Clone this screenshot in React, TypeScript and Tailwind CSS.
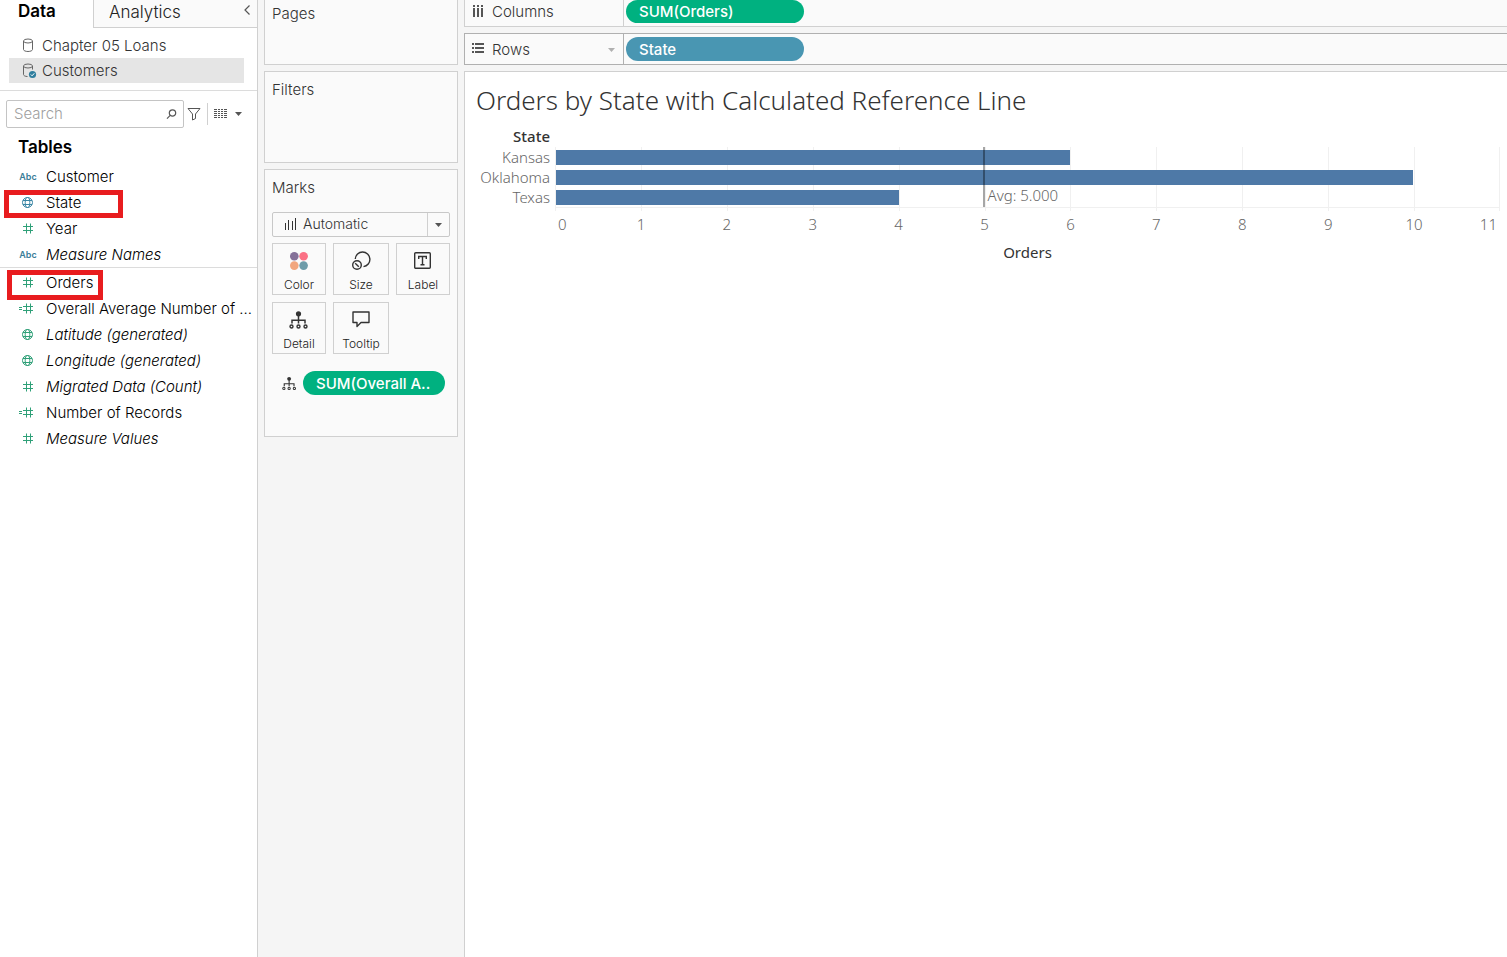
import type { ReactNode } from "react";

type Kind = "abc" | "globe" | "hash" | "calc";
type Field = { name: string; kind: Kind; generated?: boolean; mark?: "wide" | "narrow"; green?: boolean };

const dimensions: Field[] = [
  { name: "Customer", kind: "abc" },
  { name: "State", kind: "globe", mark: "wide" },
  { name: "Year", kind: "hash", green: true },
  { name: "Measure Names", kind: "abc", generated: true },
];

const measures: Field[] = [
  { name: "Orders", kind: "hash", green: true, mark: "narrow" },
  { name: "Overall Average Number of ...", kind: "calc", green: true },
  { name: "Latitude (generated)", kind: "globe", green: true, generated: true },
  { name: "Longitude (generated)", kind: "globe", green: true, generated: true },
  { name: "Migrated Data (Count)", kind: "hash", green: true, generated: true },
  { name: "Number of Records", kind: "calc", green: true },
  { name: "Measure Values", kind: "hash", green: true, generated: true },
];

const bars = [
  { state: "Kansas", orders: 6 },
  { state: "Oklahoma", orders: 10 },
  { state: "Texas", orders: 4 },
];

const axisMax = 11;
const ticks = Array.from({ length: axisMax + 1 }, (_, i) => i);

function Cylinder({ active = false }: { active?: boolean }) {
  return (
    <svg width="16" height="16" viewBox="0 0 16 16" fill="none" stroke="#666" aria-hidden="true">
      <ellipse cx="7" cy="3" rx="4.5" ry="2" />
      {active ? (
        <>
          <path d="M2.5 3v8.5c0 1 1.6 2 4 2M11.500 3v3.500" />
          <circle cx="11.500" cy="11.500" r="3.600" fill="#2f7e9e" stroke="none" />
          <path d="M9.800 11.500l1.300 1.300 2.200-2.500" stroke="#fff" />
        </>
      ) : (
        <path d="M2.500 3v8.500c0 1.100 2 2 4.500 2s4.500-.9 4.500-2v-8.500" />
      )}
    </svg>
  );
}

function FieldIcon({ kind, green }: { kind: Kind; green?: boolean }) {
  if (kind === "abc") {
    return <span className="w-5 shrink-0 text-center text-[9px] font-semibold text-[#3a7d99]">Abc</span>;
  }
  return (
    <svg
      width="20"
      height="16"
      viewBox="0 0 20 16"
      fill="none"
      stroke="currentColor"
      className={green ? "shrink-0 text-[#2fa078]" : "shrink-0 text-[#3a86a5]"}
      aria-hidden="true"
    >
      {kind === "globe" && (
        <>
          <circle cx="9.500" cy="7.500" r="5" />
          <ellipse cx="9.500" cy="7.500" rx="2.300" ry="5" />
          <path d="M5 5.500h9M5 9.500h9" />
        </>
      )}
      {kind === "hash" && <path d="M8.500 2.500v10M12.500 2.500v10M5 5.500h10M5 9.500h10" />}
      {kind === "calc" && (
        <path d="M8.500 2.500v10M12.500 2.500v10M5 5.500h10M5 9.500h10M1 6.500h3M1 8.500h3" />
      )}
    </svg>
  );
}

function FieldRow({ field }: { field: Field }) {
  return (
    <li className="relative flex h-[26px] items-center gap-2 pl-[18px] pr-1">
      <FieldIcon kind={field.kind} green={field.green} />
      <span className={field.generated ? "whitespace-nowrap italic" : "whitespace-nowrap"}>{field.name}</span>
      {field.mark === "wide" && (
        <span className="absolute left-1 top-0 h-7 w-[119px] border-[5px] border-[#e81c1f]" />
      )}
      {field.mark === "narrow" && (
        <span className="absolute left-[7px] top-0 h-[30px] w-24 border-[5px] border-[#e81c1f]" />
      )}
    </li>
  );
}

function Hierarchy({ size }: { size: number }) {
  return (
    <svg width={size} height={size} viewBox="0 0 20 20" fill="none" stroke="#333" strokeWidth="1.500" aria-hidden="true">
      <circle cx="9.500" cy="3.800" r="2.600" fill="#333" stroke="none" />
      <path d="M9.500 5v8.500M3 13.500v-3.200h13v3.200" />
      <circle cx="2.500" cy="16.500" r="1.500" strokeWidth="1.400" />
      <circle cx="9.500" cy="16.500" r="1.500" strokeWidth="1.400" />
      <circle cx="16.500" cy="16.500" r="1.500" strokeWidth="1.400" />
    </svg>
  );
}

function MarkButton({ label, children }: { label: string; children: ReactNode }) {
  return (
    <button type="button" className="flex h-[52px] flex-col items-center justify-between border border-[#d0d0d0] bg-[#fafafa] pb-px pt-[7px] text-xs text-[#222]">
      {children}
      <span className="leading-4">{label}</span>
    </button>
  );
}

function Caret({ className }: { className: string }) {
  return (
    <svg width="7" height="4" viewBox="0 0 7 4" fill="currentColor" className={className} aria-hidden="true">
      <path d="M0 0h7L3.500 4z" />
    </svg>
  );
}

function DataPane() {
  return (
    <aside className="w-[258px] shrink-0 border-r border-[#d0d0d0] bg-white text-black">
      <div className="flex h-7">
        <button type="button" className="h-full w-[93px] pb-[6px] pl-[18px] text-left text-[17px] font-semibold leading-[22px]">
          Data
        </button>
        <div className="flex flex-1 items-center justify-between border-b border-l border-[#d0d0d0] bg-[#fafafa] pb-[3px] pl-[15px] pr-[6px]">
          <button type="button" className="text-[17px] leading-[22px] text-[#222]">Analytics</button>
          <button type="button" aria-label="Collapse pane" className="pb-1">
            <svg width="8" height="10" viewBox="0 0 8 10" fill="none" stroke="#555" strokeWidth="1.200" aria-hidden="true">
              <path d="M6.500 .5L2 5l4.500 4.500" />
            </svg>
          </button>
        </div>
      </div>
      <ul className="border-b border-[#dcdcdc] pb-[7px] pl-[9px] pr-[13px] pt-[5px] text-[#333]">
        <li className="flex h-[25px] items-center gap-[5px] pl-3 pt-px"><Cylinder />Chapter 05 Loans</li>
        <li className="flex h-[25px] items-center gap-[5px] bg-[#e5e5e5] pl-3 pt-px"><Cylinder active />Customers</li>
      </ul>
      <div className="flex items-center px-[6px] pt-[9px]">
        <label className="flex h-7 w-[178px] items-center rounded-xs border border-[#c4c4c4] pl-[7px] pr-[6px]">
          <input type="text" aria-label="Search" placeholder="Search" className="min-w-0 flex-1 outline-none placeholder:text-[#a0a0a0]" />
          <svg width="11" height="11" viewBox="0 0 11 11" fill="none" stroke="#555" strokeWidth="1.200" aria-hidden="true">
            <circle cx="6.500" cy="4" r="3.200" />
            <path d="M4.200 6.400L1 9.600" />
          </svg>
        </label>
        <button type="button" aria-label="Filter fields" className="ml-[3px] mr-[6px]">
          <svg width="14" height="14" viewBox="0 0 14 14" fill="none" stroke="#555" aria-hidden="true">
            <path d="M1 1.500h12L8.500 7v4.500L5.500 13V7z" />
          </svg>
        </button>
        <button type="button" aria-label="View options" className="flex h-[22px] items-center gap-2 border-l border-[#d0d0d0] pl-[6px]">
          <svg width="13" height="10" viewBox="0 0 13 10" stroke="#555" aria-hidden="true">
            <path d="M0 .5h3M4 .5h2M7 .5h2M10 .5h3M0 2.500h3M4 2.500h2M7 2.500h2M10 2.500h3M0 4.500h3M4 4.500h2M7 4.500h2M10 4.500h3M0 6.500h3M4 6.500h2M7 6.500h2M10 6.500h3M0 8.500h3M4 8.500h2M7 8.500h2M10 8.500h3" />
          </svg>
          <Caret className="text-[#555]" />
        </button>
      </div>
      <h2 className="pb-[5px] pl-[18px] pt-[7px] text-[17px] font-semibold leading-6">Tables</h2>
      <ul className="h-[104px] border-b border-[#dcdcdc]">
        {dimensions.map((f) => <FieldRow key={f.name} field={f} />)}
      </ul>
      <ul className="pt-[2px]">
        {measures.map((f) => <FieldRow key={f.name} field={f} />)}
      </ul>
    </aside>
  );
}

function Cards() {
  return (
    <div className="flex w-[206px] shrink-0 flex-col gap-[6px] px-[6px]">
      <section className="h-[65px] border border-t-0 border-[#d0d0d0] bg-[#fafafa] px-[7px] pt-1">
        <h3 className="leading-5">Pages</h3>
      </section>
      <section className="h-[92px] border border-[#d0d0d0] bg-[#fafafa] px-[7px] pt-2">
        <h3 className="leading-5">Filters</h3>
      </section>
      <section className="border border-[#d0d0d0] bg-[#fafafa] px-[7px] pb-[41px] pt-2">
        <h3 className="leading-5">Marks</h3>
        <div className="mt-[14px] flex h-[25px] items-stretch rounded-xs border border-[#c8c8c8]">
          <svg width="13" height="13" viewBox="0 0 13 13" stroke="#333" className="ml-[11px] mr-[6px] self-center" aria-hidden="true">
            <path d="M1.500 5v7M4.500 2v10M8.500 3v9M11.500 0v12" />
          </svg>
          <select aria-label="Mark type" className="min-w-0 flex-1 appearance-none pb-px text-sm outline-none">
            <option>Automatic</option>
          </select>
          <span className="flex w-[22px] items-center justify-center border-l border-[#d0d0d0]">
            <Caret className="text-[#555]" />
          </span>
        </div>
        <div className="mt-[6px] grid grid-cols-[54fr_56fr_54fr] gap-[7px]">
          <MarkButton label="Color">
            <svg width="20" height="20" viewBox="0 0 20 20" aria-hidden="true">
              <circle cx="5.300" cy="5.300" r="4.300" fill="#857199" />
              <circle cx="14.600" cy="5.300" r="4.300" fill="#fb7185" />
              <circle cx="5.300" cy="14.600" r="4.300" fill="#f2a67e" />
              <circle cx="14.600" cy="14.600" r="4.300" fill="#6f9ca9" />
            </svg>
          </MarkButton>
          <MarkButton label="Size">
            <svg width="20" height="20" viewBox="0 0 20 20" fill="none" stroke="#333" strokeWidth="1.400" aria-hidden="true">
              <path d="M4.300 8A7.300 7.300 0 1 1 12.500 15.600" />
              <circle cx="6" cy="14" r="4.300" />
              <path d="M4.200 12.200l3.600 3.600" />
            </svg>
          </MarkButton>
          <MarkButton label="Label">
            <svg width="20" height="20" viewBox="0 0 20 20" fill="none" stroke="#333" strokeWidth="1.400" aria-hidden="true">
              <rect x="1.700" y="1.700" width="15.600" height="15.600" rx="1" />
              <path d="M5.700 8V5.500h7.600V8M9.500 5.500v8.300M7.500 13.800h4" />
            </svg>
          </MarkButton>
          <MarkButton label="Detail"><Hierarchy size={20} /></MarkButton>
          <MarkButton label="Tooltip">
            <svg width="20" height="20" viewBox="0 0 20 20" fill="none" stroke="#333" strokeWidth="1.400" aria-hidden="true">
              <path d="M2 2h16v10.500H10L6 16.500v-4H2z" strokeLinejoin="round" />
            </svg>
          </MarkButton>
        </div>
        <div className="mt-[17px] flex items-center gap-[6px] pl-[10px] pr-[5px]">
          <Hierarchy size={15} />
          <button type="button" className="h-6 flex-1 whitespace-nowrap rounded-full bg-[#00b180] pl-[13px] pt-[2px] text-left font-medium text-white">
            SUM(Overall A..
          </button>
        </div>
      </section>
    </div>
  );
}

function Chart() {
  return (
    <section className="flex-1 border-l border-t border-[#d0d0d0] bg-white pr-[7px]">
      <h1 className="pl-[11px] pt-[10px] font-['Noto_Sans','Open_Sans',sans-serif] text-[26px] font-light leading-9 text-[#333]">
        Orders by State with Calculated Reference Line
      </h1>
      <div className="mt-2 grid grid-cols-[90px_1fr] font-['Noto_Sans','Open_Sans',sans-serif] leading-5 text-[#666]">
        <div className="h-[21px] pr-[5px] text-right font-medium text-[#333]">State</div>
        <div />
        <div className="pr-[5px] text-right font-light">
          {bars.map((b) => <div key={b.state} className="h-5">{b.state}</div>)}
        </div>
        <div className="relative h-16">
          <div className="grid h-16 grid-cols-11">
            {ticks.slice(1).map((t) => (
              <div key={t} className={t === axisMax ? "border-x border-[#f0f0f0]" : "border-l border-[#f0f0f0]"} />
            ))}
          </div>
          <div className="absolute inset-x-0 top-0 h-[61px] border-b border-[#f0f0f0] px-px">
            {bars.map((b) => (
              <div key={b.state} className="h-5 pt-[3px]">
                <div className="h-[15px] bg-[#4e79a7]" style={{ width: `${(b.orders / axisMax) * 100}%` }} />
              </div>
            ))}
          </div>
          <div className="absolute left-5/11 top-0 -ml-[2px] h-[60px] w-[2px] bg-black/35" />
          <div className="absolute left-5/11 top-[38px] whitespace-nowrap pl-[3px] font-light">Avg: 5.000</div>
        </div>
        <div />
        <div className="flex justify-between pt-[3px] font-light">
          {ticks.map((t) => (
            <span
              key={t}
              className={t === 0 ? "flex w-0 justify-start" : t === axisMax ? "flex w-0 justify-end" : "flex w-0 justify-center"}
            >
              <span className={t === 0 || t === axisMax ? "px-[3px]" : ""}>{t}</span>
            </span>
          ))}
        </div>
        <div />
        <div className="pt-2 text-center font-normal text-[#333]">Orders</div>
      </div>
    </section>
  );
}

export default function App() {
  return (
    <main className="flex min-h-screen bg-[#f5f5f5] font-['Inter','Liberation_Sans',sans-serif] text-[15px] font-light text-[#333]">
      <DataPane />
      <Cards />
      <div className="flex min-w-0 flex-1 flex-col gap-[6px]">
        <div className="flex h-[27px] border-b border-l border-[#d0d0d0] bg-[#fafafa]">
          <div className="flex w-[159px] items-center gap-2 border-r border-[#d0d0d0] pb-[2px] pl-[7px]">
            <svg width="12" height="14" viewBox="0 0 12 14" fill="#555" aria-hidden="true">
              <path d="M1 0h2v2H1zM5 0h2v2H5zM9 0h2v2H9zM1 3h2v9H1zM5 3h2v9H5zM9 3h2v9H9z" />
            </svg>
            Columns
          </div>
          <button type="button" className="ml-[2px] h-[23px] w-[178px] rounded-full bg-[#00b180] pl-[13px] pt-px text-left font-medium text-white">SUM(Orders)</button>
        </div>
        <div className="flex h-8 items-stretch border-y border-l border-[#b0b0b0] bg-[#fafafa]">
          <div className="flex w-[159px] items-center gap-2 border-r border-[#b0b0b0] pl-[7px] pr-2 pt-[2px]">
            <svg width="12" height="14" viewBox="0 0 12 14" fill="#555" aria-hidden="true">
              <path d="M0 0h2v2H0zM0 4h2v2H0zM0 8h2v2H0zM3 0h9v2H3zM3 4h9v2H3zM3 8h9v2H3z" />
            </svg>
            <span className="flex-1">Rows</span>
            <Caret className="text-[#b0b0b0]" />
          </div>
          <button type="button" className="ml-[2px] h-6 w-[178px] self-center rounded-full bg-[#4996b2] pl-[13px] pt-[2px] text-left font-medium text-white">State</button>
        </div>
        <Chart />
      </div>
    </main>
  );
}
